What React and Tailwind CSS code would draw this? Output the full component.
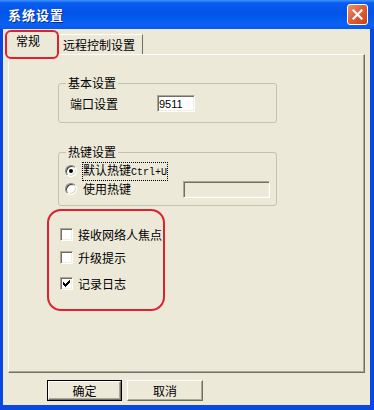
import React from "react";

const CJK = "font-['SimSun','Noto_Sans_CJK_SC',sans-serif]";

const checkPixels = [
  [6, 0], [5, 1], [6, 1], [0, 2], [4, 2], [5, 2], [6, 2],
  [0, 3], [1, 3], [3, 3], [4, 3], [5, 3],
  [0, 4], [1, 4], [2, 4], [3, 4], [4, 4],
  [1, 5], [2, 5], [3, 5], [2, 6],
];
const checkPath = checkPixels.map(([x, y]) => `M${x} ${y}h1v1h-1z`).join("");

function Checkbox({ checked, label, className = "" }) {
  return (
    <div className={"flex items-center h-[13px] " + className}>
      <div className="w-[13px] h-[13px] shrink-0 bg-white border border-t-[#aca899] border-l-[#aca899] border-r-white border-b-white shadow-[inset_1px_1px_0_#716f64,inset_-1px_-1px_0_#f1efe2] flex items-center justify-center">
        {checked && (
          <svg width="7" height="7" viewBox="0 0 7 7" shapeRendering="crispEdges">
            <path d={checkPath} fill="#000" />
          </svg>
        )}
      </div>
      <span className="ml-[5px] text-[12px] leading-[14px] whitespace-nowrap text-black">{label}</span>
    </div>
  );
}

function Radio({ checked }) {
  return (
    <div className="w-[12px] h-[12px] shrink-0 rounded-full bg-white border border-t-[#8a8678] border-l-[#8a8678] border-r-white border-b-white shadow-[inset_1px_1px_0_#404040,inset_-1px_-1px_0_#d8d4c4] flex items-center justify-center">
      {checked && <div className="w-[4px] h-[4px] rounded-full bg-black" />}
    </div>
  );
}

function Sunken({ className = "", children }) {
  return (
    <div
      className={
        "border border-t-[#aca899] border-l-[#aca899] border-r-white border-b-white shadow-[inset_1px_1px_0_#716f64,inset_-1px_-1px_0_#f1efe2] " +
        className
      }
    >
      {children}
    </div>
  );
}

export default function App() {
  return (
    <div className={"w-[374px] h-[410px] flex flex-col bg-[#0a48e2] overflow-hidden " + CJK}>
      {/* Title bar */}
      <div className="h-[29px] shrink-0 flex items-center justify-between pl-[8px] pr-[6px] bg-[linear-gradient(to_bottom,#3d95ff_0%,#0a5cf0_10%,#0054e8_45%,#0a62f5_85%,#0758ea_100%)]">
        <span className="text-white text-[13px] font-bold leading-[16px] tracking-[1px] [text-shadow:1px_1px_0_#0a2a8a]">
          系统设置
        </span>
        <div className="w-[21px] h-[21px] rounded-[3px] border border-white bg-[linear-gradient(135deg,#f0906c_0%,#e0603a_45%,#c8401c_100%)] flex items-center justify-center">
          <svg width="11" height="11" viewBox="0 0 11 11">
            <path d="M1.5 1.5L9.5 9.5M9.5 1.5L1.5 9.5" stroke="#fff" strokeWidth="2.2" strokeLinecap="square" />
          </svg>
        </div>
      </div>

      {/* Body */}
      <div className="flex-1 ml-[3px] mr-[4px] mb-[5px] bg-[#ece9d8] flex flex-col pl-[5px] pt-[2px]">
        {/* Tabs */}
        <div className="relative z-10 h-[23px] flex items-end">
          <div className="self-start -ml-[2px] w-[52px] h-[24px] bg-[#ece9d8] border-l border-t border-r border-l-white border-t-white border-r-[#716f64] rounded-t-[2px] pl-[9px] pt-[2px] text-[12px] leading-[14px] text-black">
            常规
          </div>
          <div className="w-[85px] h-[20px] border-t border-r border-t-white border-r-[#716f64] pl-[5px] pt-[3px] text-[12px] leading-[14px] text-black">
            远程控制设置
          </div>
          <div className="absolute left-[-3px] top-[-1px] w-[54px] h-[29px] border-2 border-[#e0202e] rounded-[6px] pointer-events-none" />
        </div>

        {/* Panel */}
        <div className="w-[357px] h-[319px] bg-[#ece9d8] border border-l-white border-t-white border-r-[#716f64] border-b-[#716f64] shadow-[inset_-1px_-1px_0_#aca899] flex flex-col">
          {/* 基本设置 */}
          <fieldset className="ml-[49px] mt-[21px] w-[219px] border border-[#c5c2b2] rounded-[3px] pb-[10px] pt-[5px]">
            <legend className="ml-[7px] px-[2px] text-[12px] leading-[14px] text-black">基本设置</legend>
            <div className="flex items-center h-[17px] pl-[11px]">
              <span className="w-[87px] text-[12px] leading-[14px] text-black">端口设置</span>
              <Sunken className="w-[38px] h-[17px] bg-white flex items-center pl-[1px]">
                <span className="font-['Liberation_Sans',sans-serif] text-[11px] leading-[12px] text-black">9511</span>
              </Sunken>
            </div>
          </fieldset>

          {/* 热键设置 */}
          <fieldset className="ml-[49px] mt-[22px] w-[219px] border border-[#c5c2b2] rounded-[3px] pb-[8px] pt-[4px]">
            <legend className="ml-[7px] px-[2px] text-[12px] leading-[14px] text-black">热键设置</legend>
            <div className="flex items-center h-[16px] pl-[6px]">
              <Radio checked />
              <span className="ml-[5px] border border-dotted border-black text-[12px] leading-[14px] text-black whitespace-nowrap">
                默认热键<span className="font-['Liberation_Mono',monospace] text-[10px]">Ctrl+U</span>
              </span>
            </div>
            <div className="flex items-center h-[16px] pl-[6px] mt-[2px]">
              <Radio />
              <span className="ml-[5px] border border-transparent text-[12px] leading-[14px] text-black whitespace-nowrap">
                使用热键
              </span>
              <Sunken className="ml-[51px] w-[87px] h-[17px] bg-[#ece9d8]" />
            </div>
          </fieldset>

          {/* Checkbox group (annotated) */}
          <div className="ml-[38px] mt-[3px] w-[118px] h-[102px] border-2 border-[#e0202e] rounded-[14px] flex flex-col pl-[11px] pt-[17px]">
            <Checkbox label="接收网络人焦点" />
            <Checkbox label="升级提示" className="mt-[10px]" />
            <Checkbox label="记录日志" checked className="mt-[13px]" />
          </div>
        </div>

        {/* Buttons */}
        <div className="flex gap-[5px] ml-[39px] mt-[7px]">
          <div className="w-[75px] h-[21px] border border-black bg-[#ece9d8] flex">
            <div className="flex-1 flex items-center justify-center border border-t-white border-l-white border-r-[#716f64] border-b-[#716f64] shadow-[inset_-1px_-1px_0_#aca899] text-[12px] leading-[14px] text-black">
              确定
            </div>
          </div>
          <div className="w-[76px] h-[21px] bg-[#ece9d8] flex items-center justify-center border border-t-white border-l-white border-r-[#716f64] border-b-[#716f64] shadow-[inset_-1px_-1px_0_#aca899] text-[12px] leading-[14px] text-black">
            取消
          </div>
        </div>
      </div>
    </div>
  );
}
